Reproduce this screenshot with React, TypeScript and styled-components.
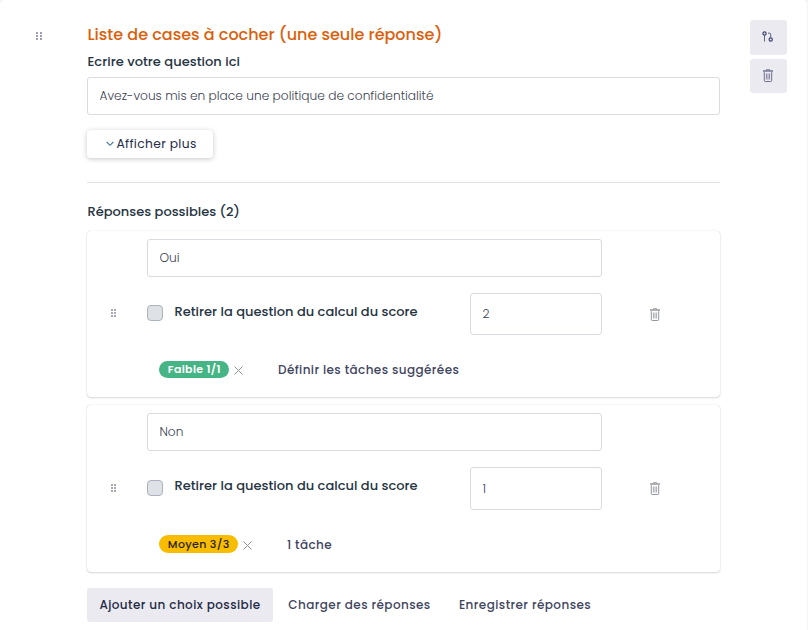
import React from "react";
import styled, { createGlobalStyle } from "styled-components";

const GlobalStyle = createGlobalStyle`
  *, *::before, *::after { box-sizing: border-box; }
  body { margin: 0; background: #f5f5f7; }
  body, button, input { font-family: "Poppins", "Inter", sans-serif; font-size: 13px; }
  button { cursor: pointer; padding: 0; border: 0; background: none; }
  svg { display: block; }
`;

const Panel = styled.main`
  display: grid;
  grid-template-columns: 87px 633px 37px;
  align-items: start;
  width: 807px;
  height: 630px;
  background: #fff;
  border-top-left-radius: 5px;
  border-top-right-radius: 5px;
  overflow: hidden;
`;

const Gutter = styled.div`
  padding: 32px 0 0 36px;
`;

const Editor = styled.section`
  display: flex;
  flex-direction: column;
  padding-top: 22px;
`;

const Actions = styled.div`
  display: flex;
  flex-direction: column;
  gap: 4px;
  width: 37px;
  margin-left: 30px;
  padding-top: 20px;
`;

const IconButton = styled.button<{ $height: number }>`
  display: flex;
  align-items: center;
  justify-content: center;
  width: 37px;
  height: ${(p) => p.$height}px;
  padding: 0 2px ${(p) => (p.$height === 35 ? 3 : 1)}px 0;
  border-radius: 3px;
  background: #ebeaf0;
  color: #5f6280;
`;

const Title = styled.h1`
  margin: 0;
  padding: 1px 0 0 0.5px;
  font-size: 16px;
  font-weight: 500;
  line-height: 24px;
  color: #db5f0c;
`;

const Label = styled.label`
  margin-top: 5px;
  padding-left: 0.5px;
  font-weight: 500;
  line-height: 20px;
  letter-spacing: 0.03px;
  color: #263442;
`;

const Field = styled.input<{ $height?: number }>`
  display: block;
  width: 100%;
  height: ${(p) => p.$height ?? 38}px;
  padding: 0 11.5px;
  border: 1px solid #dadae1;
  border-radius: 3px;
  outline: 0;
  background: #fff;
  font-size: 12.2px;
  font-weight: 300;
  color: #3c4252;
`;

const QuestionField = styled(Field)`
  margin-top: 5px;
`;

const MoreButton = styled.button`
  display: flex;
  align-items: center;
  gap: 2.5px;
  width: 126px;
  height: 28px;
  margin-top: 15px;
  padding: 0 0 1px 19px;
  border-radius: 4px;
  background: #fff;
  box-shadow: 0 1px 5px rgba(40, 40, 70, 0.26);
  font-size: 12.25px;
  font-weight: 400;
  letter-spacing: 0.35px;
  color: #252c48;
`;

const Divider = styled.hr`
  width: 100%;
  height: 1px;
  margin: 24px 0 0;
  border: 0;
  background: #e1e1e5;
`;

const SectionTitle = styled.h2`
  margin: 19px 0 9px;
  padding-left: 0.5px;
  font-size: 13px;
  font-weight: 500;
  line-height: 20px;
  color: #263442;
`;

const AnswerList = styled.div`
  display: flex;
  flex-direction: column;
  gap: 8px;
`;

const Card = styled.article<{ $height: number }>`
  display: grid;
  grid-template-columns: 60px 455px 1fr;
  height: ${(p) => p.$height}px;
  border-radius: 4px;
  background: #fff;
  box-shadow: 0 0 1px rgba(50, 60, 80, 0.28), 0 1px 2px rgba(50, 60, 80, 0.18);
`;

const CardHandle = styled.div<{ $top: number }>`
  padding: ${(p) => p.$top}px 0 0 24px;
`;

const CardBody = styled.div`
  padding-top: 8px;
`;

const ScoreRow = styled.div`
  display: grid;
  grid-template-columns: 27px 1fr 132px;
  align-items: start;
  margin-top: 16px;
`;

const Checkbox = styled.input<{ $top: number }>`
  appearance: none;
  width: 16px;
  height: 16px;
  margin: ${(p) => p.$top}px 0 0;
  border: 1px solid #acb2bd;
  border-radius: 4px;
  background: #dee1e6;
`;

const CheckLabel = styled.label`
  margin-top: 9px;
  padding-left: 0.4px;
  font-weight: 500;
  line-height: 20px;
  letter-spacing: 0.02px;
  color: #263442;
`;

const TaskRow = styled.div`
  display: flex;
  align-items: center;
  height: 20px;
  margin: 25px 0 0 12px;
`;

const Badge = styled.span<{ $tone: "low" | "medium" }>`
  display: flex;
  align-items: center;
  justify-content: center;
  width: ${(p) => (p.$tone === "low" ? 70 : 79)}px;
  height: ${(p) => (p.$tone === "low" ? 17 : 18)}px;
  margin-bottom: ${(p) => (p.$tone === "low" ? 1 : 2)}px;
  padding-left: 0.5px;
  border-radius: 9px;
  background: ${(p) => (p.$tone === "low" ? "#45b585" : "#f8bc00")};
  font-size: 11px;
  font-weight: ${(p) => (p.$tone === "low" ? 600 : 500)};
  letter-spacing: 0.35px;
  color: ${(p) => (p.$tone === "low" ? "#fff" : "#25231a")};
`;

const RemoveButton = styled.button`
  margin: 1px 35px 0 5px;
  color: #8d939c;
`;

const TaskLink = styled.button`
  font-size: 12px;
  font-weight: 500;
  letter-spacing: 0.4px;
  color: #3f455e;
`;

const DeleteButton = styled.button`
  justify-self: start;
  align-self: start;
  margin: 77px 0 0 48px;
  color: #868992;
`;

const Footer = styled.footer`
  display: flex;
  margin-top: 16px;
`;

const FooterButton = styled.button<{ $width: number; $filled?: boolean }>`
  width: ${(p) => p.$width}px;
  height: 34px;
  border-radius: 3px;
  background: ${(p) => (p.$filled ? "#ebeaf0" : "transparent")};
  font-size: 12px;
  font-weight: 500;
  letter-spacing: 0.42px;
  white-space: nowrap;
  color: ${(p) => (p.$filled ? "#232a46" : "#3f455e")};
`;

const DragDots = ({ wide }: { wide?: boolean }) => (
  <svg width="6" height="9" viewBox="0 0 6 9" fill={wide ? "#9c9fb2" : "#a8a9b4"} shapeRendering="crispEdges">
    {[0, 3, 6].map((y) => (
      <React.Fragment key={y}>
        <rect x="0" y={y} width="2" height="2" />
        <rect x={wide ? 4 : 3} y={y} width="2" height="2" />
      </React.Fragment>
    ))}
  </svg>
);

const TrashIcon = () => (
  <svg width="10" height="13" viewBox="0 0 10 13" fill="none" stroke="currentColor">
    <path d="M3.5 1.5V.5h3v1" opacity=".7" />
    <path d="M0 2h10" strokeWidth="2" opacity=".65" />
    <path d="M1.3 3.2v8.3a1 1 0 0 0 1 1h5.4a1 1 0 0 0 1-1V3.2" strokeWidth=".9" />
    <path d="M3.4 4.5v6M5 4.5v6M6.6 4.5v6" strokeWidth=".7" />
  </svg>
);

const BranchIcon = () => (
  <svg width="12" height="11" viewBox="0 0 12 11" fill="none" stroke="currentColor">
    <circle cx="2.5" cy="2.5" r="1.6" stroke="#3f4270" strokeWidth="1.2" />
    <path d="M2.5 4v6.5" />
    <path d="M6 2.2h1.7a1 1 0 0 1 1 1v3.3" />
    <circle cx="8.7" cy="8.5" r="1.6" stroke="#3f4270" strokeWidth="1.2" />
  </svg>
);

const ChevronIcon = () => (
  <svg width="8" height="6" viewBox="0 0 8 6" fill="none" stroke="#4b7893" strokeWidth="1.1">
    <path d="M.7 1L4 4.3 7.3 1" />
  </svg>
);

const CrossIcon = () => (
  <svg width="9" height="9" viewBox="0 0 9 9" fill="none" stroke="currentColor">
    <path d="M.5.5l8 8M8.5.5l-8 8" />
  </svg>
);

type AnswerProps = {
  answer: string;
  score: string;
  tone: "low" | "medium";
  badge: string;
  task: string;
  cardHeight: number;
  scoreHeight: number;
};

const Answer = ({ answer, score, tone, badge, task, cardHeight, scoreHeight }: AnswerProps) => (
  <Card $height={cardHeight}>
    <CardHandle $top={scoreHeight + 36}>
      <DragDots />
    </CardHandle>
    <CardBody>
      <Field defaultValue={answer} />
      <ScoreRow>
        <Checkbox type="checkbox" id={`skip-${tone}`} $top={scoreHeight - 30} />
        <CheckLabel htmlFor={`skip-${tone}`}>Retirer la question du calcul du score</CheckLabel>
        <Field defaultValue={score} $height={scoreHeight} />
      </ScoreRow>
      <TaskRow>
        <Badge $tone={tone}>{badge}</Badge>
        <RemoveButton aria-label="Retirer">
          <CrossIcon />
        </RemoveButton>
        <TaskLink>{task}</TaskLink>
      </TaskRow>
    </CardBody>
    <DeleteButton aria-label="Supprimer">
      <TrashIcon />
    </DeleteButton>
  </Card>
);

export default function App() {
  return (
    <>
      <GlobalStyle />
      <Panel>
        <Gutter>
          <DragDots wide />
        </Gutter>
        <Editor>
          <Title>Liste de cases à cocher (une seule réponse)</Title>
          <Label htmlFor="question">Ecrire votre question ici</Label>
          <QuestionField id="question" defaultValue="Avez-vous mis en place une politique de confidentialité" />
          <MoreButton>
            <ChevronIcon />
            Afficher plus
          </MoreButton>
          <Divider />
          <SectionTitle>Réponses possibles (2)</SectionTitle>
          <AnswerList>
            <Answer answer="Oui" score="2" tone="low" badge="Faible 1/1" task="Définir les tâches suggérées" cardHeight={166} scoreHeight={42} />
            <Answer answer="Non" score="1" tone="medium" badge="Moyen 3/3" task="1 tâche" cardHeight={167} scoreHeight={43} />
          </AnswerList>
          <Footer>
            <FooterButton $filled $width={186}>Ajouter un choix possible</FooterButton>
            <FooterButton $width={173}>Charger des réponses</FooterButton>
            <FooterButton $width={158}>Enregistrer réponses</FooterButton>
          </Footer>
        </Editor>
        <Actions>
          <IconButton $height={35} aria-label="Réordonner">
            <BranchIcon />
          </IconButton>
          <IconButton $height={34} aria-label="Supprimer la question">
            <TrashIcon />
          </IconButton>
        </Actions>
      </Panel>
    </>
  );
}
